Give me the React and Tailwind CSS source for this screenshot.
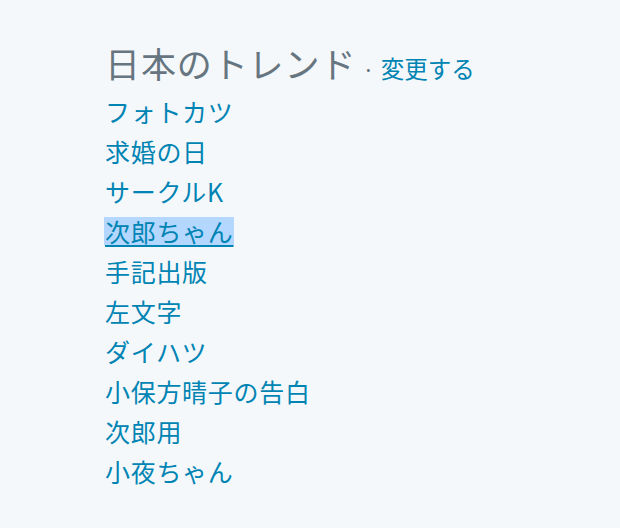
import React from "react";

const trends = [
  "フォトカツ",
  "求婚の日",
  "サークルK",
  "次郎ちゃん",
  "手記出版",
  "左文字",
  "ダイハツ",
  "小保方晴子の告白",
  "次郎用",
  "小夜ちゃん",
];

export default function App() {
  return (
    <div
      className="min-h-[528px] w-[620px] bg-[#f5f8fa] pl-[105px] pt-[41px]"
      style={{ fontFamily: '"Noto Sans CJK JP", "Noto Sans", sans-serif' }}
    >
      <div className="flex items-baseline">
        <h2 className="text-[35px] leading-[44px] font-normal tracking-[0.9px] text-[#66757f]">日本のトレンド</h2>
        <span className="ml-[6px] mr-[6px] text-[22px] text-[#66757f]">·</span>
        <a className="text-[23.5px] text-[#0084b4]">変更する</a>
      </div>
      <ul className="mt-[5px]">
        {trends.map((t, i) => (
          <li key={i} className="h-[40px] flex items-center">
            <a
              className={`text-[25px] leading-[28px] tracking-[0.7px] text-[#0084b4] ${
                i === 3 ? "-ml-px pl-px bg-[#b3d7ff] underline decoration-2 underline-offset-[3px]" : ""
              }`}
            >
              {t}
            </a>
          </li>
        ))}
      </ul>
    </div>
  );
}
